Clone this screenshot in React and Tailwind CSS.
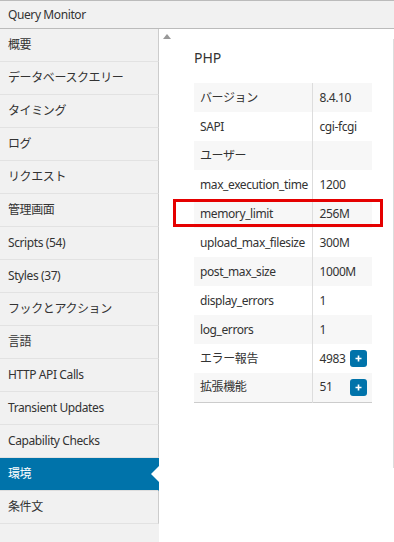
import React from 'react'

const menu = [
    '概要',
    'データベースクエリー',
    'タイミング',
    'ログ',
    'リクエスト',
    '管理画面',
    'Scripts (54)',
    'Styles (37)',
    'フックとアクション',
    '言語',
    'HTTP API Calls',
    'Transient Updates',
    'Capability Checks',
    '環境',
    '条件文',
]

const rows = [
    { name: 'バージョン', value: '8.4.10' },
    { name: 'SAPI', value: 'cgi-fcgi' },
    { name: 'ユーザー', value: '' },
    { name: 'max_execution_time', value: '1200' },
    { name: 'memory_limit', value: '256M' },
    { name: 'upload_max_filesize', value: '300M' },
    { name: 'post_max_size', value: '1000M' },
    { name: 'display_errors', value: '1' },
    { name: 'log_errors', value: '1' },
    { name: 'エラー報告', value: '4983', toggle: true },
    { name: '拡張機能', value: '51', toggle: true },
]

const PlusButton = () => (
    <button className="flex h-[17px] w-[17px] shrink-0 items-center justify-center rounded-[3px] bg-[#0073aa] text-white">
        <svg width="7" height="7" viewBox="0 0 7 7">
            <path d="M3.5 0.5v6M0.5 3.5h6" stroke="white" strokeWidth="1.6" />
        </svg>
    </button>
)

const App = () => {
    const active = '環境'

    return (
        <div className="h-[542px] w-[394px] overflow-hidden bg-white font-['Noto_Sans','Noto_Sans_CJK_JP',sans-serif] text-[12px] tracking-[-0.4px] text-[#333]">
            <div className="flex h-[29px] items-center border-y border-[#bbb] bg-[#f1f1f1] px-2">
                Query Monitor
            </div>

            <div className="flex h-[513px]">
                <nav className="w-[159px] shrink-0 bg-[#f1f1f1]">
                    <ul>
                        {menu.map((item) => (
                            <li
                                key={item}
                                className={
                                    item === active
                                        ? 'relative flex h-[33px] items-center border-b border-r border-b-[#ddd] border-r-[#0073aa] bg-[#0073aa] px-2 text-white'
                                        : 'flex h-[33px] items-center border-b border-r border-b-[#e2e2e2] border-r-[#ccc] px-2'
                                }
                            >
                                {item}
                                {item === active && (
                                    <span className="absolute -right-px top-1/2 h-0 w-0 -translate-y-1/2 border-y-[8px] border-r-[8px] border-y-transparent border-r-white" />
                                )}
                            </li>
                        ))}
                    </ul>
                </nav>

                <main className="relative flex-1 pt-[10px]">
                    <span className="absolute left-[4px] top-[5px] h-0 w-0 border-x-[4px] border-b-[5px] border-x-transparent border-b-[#999]" />

                    <section className="h-[429px] border-r border-[#ddd] pl-[35px] pt-[10px]">
                        <h2 className="mb-[16px] h-[18px] text-[14px] leading-[18px] tracking-normal">PHP</h2>

                        <table className="w-[178px] table-fixed border-b border-[#ccc]">
                            <tbody>
                                {rows.map((row, i) => (
                                    <tr key={row.name} className={i % 2 === 0 ? 'h-[29px] bg-[#f7f7f7]' : 'h-[29px]'}>
                                        <td className="w-[118px] overflow-hidden whitespace-nowrap border-r border-[#ddd] pl-[6px]">
                                            {row.name}
                                        </td>
                                        <td className="whitespace-nowrap pl-[7px] pr-[5px]">
                                            {row.toggle ? (
                                                <div className="flex items-center justify-between">
                                                    <span>{row.value}</span>
                                                    <PlusButton />
                                                </div>
                                            ) : (
                                                row.value
                                            )}
                                        </td>
                                    </tr>
                                ))}
                            </tbody>
                        </table>
                    </section>

                    {/* highlight round memory_limit */}
                    <div className="absolute left-[14px] top-[170px] h-[28px] w-[210px] border-[3px] border-[#e50000]" />
                </main>
            </div>
        </div>
    )
}

export default App
